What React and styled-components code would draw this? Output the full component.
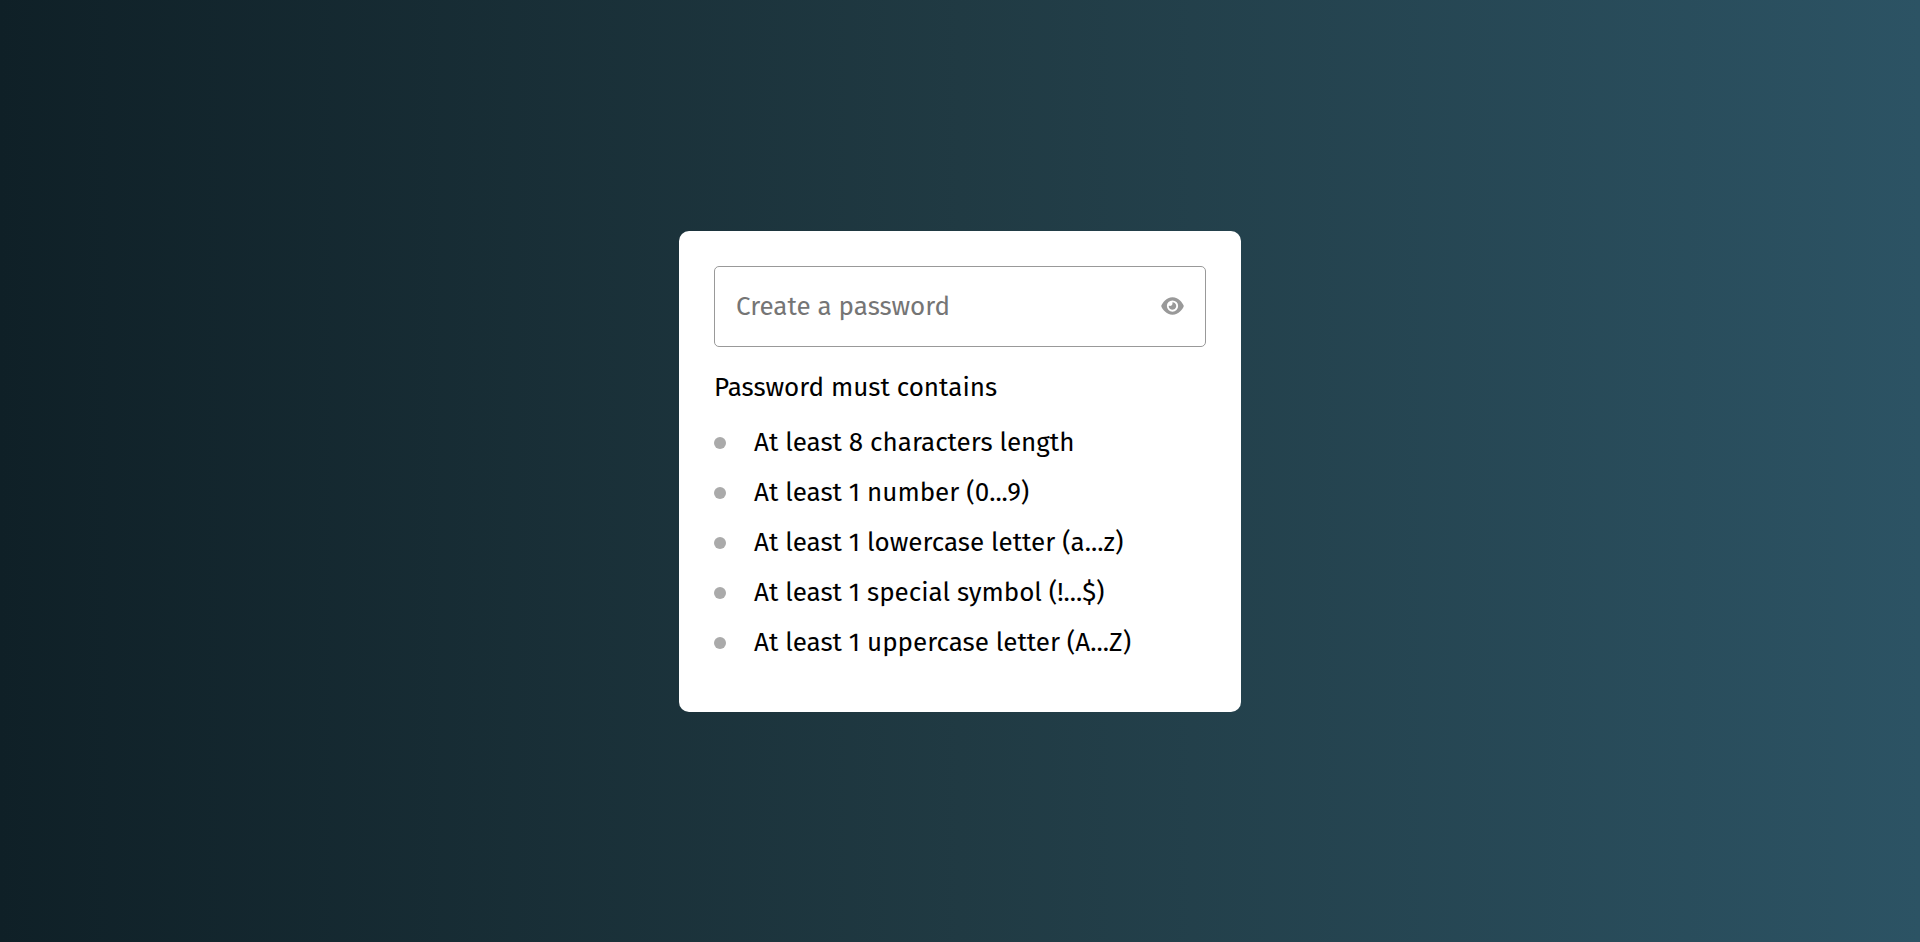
import React, { useState } from "react";
import styled, { createGlobalStyle } from "styled-components";
import { FaEye, FaEyeSlash } from "react-icons/fa6";

const GlobalStyle = createGlobalStyle`
  * {
    box-sizing: border-box;
    margin: 0;
    padding: 0;
  }

  body {
    font-family: "Fira Sans", "Noto Sans", sans-serif;
    font-size: 26px;
    line-height: 32px;
    color: #000;
  }
`;

const Page = styled.main`
  display: flex;
  align-items: center;
  justify-content: center;
  min-height: 100vh;
  background: linear-gradient(to right, #0f2027, #203a43, #2c5364);
`;

const Card = styled.form`
  display: flex;
  flex-direction: column;
  width: 100%;
  max-width: 562px;
  padding: 35px 35px 53px;
  border-radius: 10px;
  background: #fff;
`;

const Field = styled.div`
  display: flex;
  align-items: center;
  gap: 12px;
  height: 81px;
  padding: 0 21px;
  border: 1px solid #999;
  border-radius: 5px;
`;

const PasswordInput = styled.input`
  flex: 1;
  min-width: 0;
  border: 0;
  outline: 0;
  background: transparent;
  font: inherit;
  line-height: 33px;

  &::placeholder {
    color: #757575;
  }
`;

const ToggleButton = styled.button`
  display: flex;
  border: 0;
  background: transparent;
  color: #999;
  cursor: pointer;

  svg {
    width: 23px;
    height: 20px;
  }
`;

const Heading = styled.p`
  margin-top: 25px;
`;

const Requirements = styled.ul`
  display: flex;
  flex-direction: column;
  gap: 18px;
  margin-top: 23px;
  list-style: none;
`;

const Requirement = styled.li`
  display: flex;
  align-items: center;
  gap: 28px;
`;

const Dot = styled.span`
  flex: none;
  width: 12px;
  height: 12px;
  border-radius: 50%;
  background: ${({ $met }) => ($met ? "#4285f4" : "#aaa")};
`;

const rules = [
  { label: "At least 8 characters length", test: /.{8,}/ },
  { label: "At least 1 number (0...9)", test: /[0-9]/ },
  { label: "At least 1 lowercase letter (a...z)", test: /[a-z]/ },
  { label: "At least 1 special symbol (!...$)", test: /[^A-Za-z0-9]/ },
  { label: "At least 1 uppercase letter (A...Z)", test: /[A-Z]/ },
];

export default function App() {
  const [password, setPassword] = useState("");
  const [visible, setVisible] = useState(false);

  return (
    <>
      <GlobalStyle />
      <Page>
        <Card onSubmit={(event) => event.preventDefault()}>
          <Field>
            <PasswordInput
              type={visible ? "text" : "password"}
              placeholder="Create a password"
              aria-label="Create a password"
              value={password}
              onChange={(event) => setPassword(event.target.value)}
            />
            <ToggleButton
              type="button"
              aria-label={visible ? "Hide password" : "Show password"}
              onClick={() => setVisible(!visible)}
            >
              {visible ? <FaEyeSlash /> : <FaEye />}
            </ToggleButton>
          </Field>
          <Heading>Password must contains</Heading>
          <Requirements>
            {rules.map(({ label, test }) => (
              <Requirement key={label}>
                <Dot $met={test.test(password)} />
                {label}
              </Requirement>
            ))}
          </Requirements>
        </Card>
      </Page>
    </>
  );
}
